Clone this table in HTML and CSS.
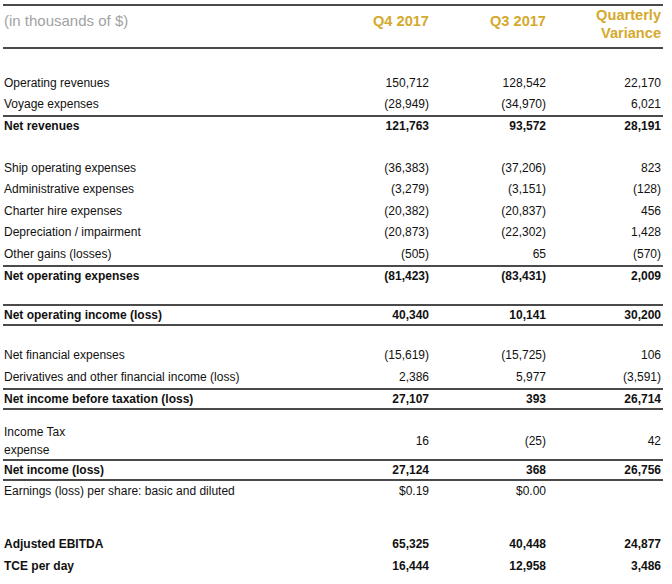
FILE: index.html
```html
<!DOCTYPE html>
<html>
<head>
<meta charset="utf-8">
<link rel="stylesheet" href="styles.css">
</head>
<body>
<table class="fin">
  <colgroup>
    <col class="c-label"><col class="c-num"><col class="c-num2"><col class="c-var">
  </colgroup>
  <tr class="head">
    <td class="units single">(in thousands of $)</td>
    <td class="hnum single">Q4 2017</td>
    <td class="hnum single">Q3 2017</td>
    <td class="hnum">Quarterly<br>Variance</td>
  </tr>
  <tr class="sp sp-a"><td colspan="4"></td></tr>
  <tr class="r"><td>Operating revenues</td><td>150,712</td><td>128,542</td><td>22,170</td></tr>
  <tr class="r under"><td>Voyage expenses</td><td>(28,949)</td><td>(34,970)</td><td>6,021</td></tr>
  <tr class="r tot"><td>Net revenues</td><td>121,763</td><td>93,572</td><td>28,191</td></tr>
  <tr class="sp sp-b"><td colspan="4"></td></tr>
  <tr class="r"><td>Ship operating expenses</td><td>(36,383)</td><td>(37,206)</td><td>823</td></tr>
  <tr class="r"><td>Administrative expenses</td><td>(3,279)</td><td>(3,151)</td><td>(128)</td></tr>
  <tr class="r"><td>Charter hire expenses</td><td>(20,382)</td><td>(20,837)</td><td>456</td></tr>
  <tr class="r"><td>Depreciation / impairment</td><td>(20,873)</td><td>(22,302)</td><td>1,428</td></tr>
  <tr class="r under"><td>Other gains (losses)</td><td>(505)</td><td>65</td><td>(570)</td></tr>
  <tr class="r tot"><td>Net operating expenses</td><td>(81,423)</td><td>(83,431)</td><td>2,009</td></tr>
  <tr class="sp sp-c"><td colspan="4"></td></tr>
  <tr class="r tot boxed"><td>Net operating income (loss)</td><td>40,340</td><td>10,141</td><td>30,200</td></tr>
  <tr class="sp sp-c"><td colspan="4"></td></tr>
  <tr class="r"><td>Net financial expenses</td><td>(15,619)</td><td>(15,725)</td><td>106</td></tr>
  <tr class="r under"><td>Derivatives and other financial income (loss)</td><td>2,386</td><td>5,977</td><td>(3,591)</td></tr>
  <tr class="r tot under"><td>Net income before taxation (loss)</td><td>27,107</td><td>393</td><td>26,714</td></tr>
  <tr class="sp sp-d"><td colspan="4"></td></tr>
  <tr class="r two under"><td>Income Tax<br>expense</td><td>16</td><td>(25)</td><td>42</td></tr>
  <tr class="r tot under"><td>Net income (loss)</td><td>27,124</td><td>368</td><td>26,756</td></tr>
  <tr class="r"><td>Earnings (loss) per share: basic and diluted</td><td>$0.19</td><td>$0.00</td><td></td></tr>
  <tr class="sp sp-e"><td colspan="4"></td></tr>
  <tr class="r tot big"><td>Adjusted EBITDA</td><td>65,325</td><td>40,448</td><td>24,877</td></tr>
  <tr class="r tot big"><td>TCE per day</td><td>16,444</td><td>12,958</td><td>3,486</td></tr>
</table>
</body>
</html>
```
FILE: styles.css
```css
html, body {
  margin: 0;
  padding: 0;
  background: #ffffff;
}
body {
  padding: 4px 0 0 3px;
  font-family: "Liberation Sans", Arial, sans-serif;
  color: #111111;
}
.fin {
  border-collapse: collapse;
  width: 660px;
  table-layout: fixed;
}
.c-label { width: 337px; }
.c-num { width: 91px; }
.c-num2 { width: 117px; }
.c-var { width: 115px; }
.fin td {
  padding: 0 2px 0 1px;
  font-size: 12px;
  line-height: 14px;
  white-space: nowrap;
  vertical-align: middle;
}
.fin td + td { text-align: right; }
.head td {
  height: 36px;
  padding-top: 0;
  padding-bottom: 5px;
  vertical-align: top;
  border-top: 2px solid #4a4a4a;
  border-bottom: 2px solid #4a4a4a;
}
.head td.single {
  height: 30px;
  padding-top: 6px;
}
.head .units {
  color: #a2a2a2;
  font-size: 15px;
  line-height: 18px;
}
.head .hnum {
  color: #d4a92c;
  font-weight: bold;
  font-size: 14.6px;
  line-height: 18px;
}
.sp td { padding: 0; }
.sp-a td { height: 23px; }
.sp-b td { height: 22px; }
.sp-c td { height: 19px; }
.sp-d td { height: 13px; }
.sp-e td { height: 31px; }
.r td { height: 21.5px; }
.r.tot td { height: 18px; font-weight: bold; }
.r.tot.big td { height: 22px; }
.under td { border-bottom: 2px solid #4a4a4a; }
.r.boxed td {
  border-top: 2px solid #4a4a4a;
  border-bottom: 2px solid #4a4a4a;
}
.r.two td { height: 36px; }
.two td:first-child { line-height: 18px; }
```
